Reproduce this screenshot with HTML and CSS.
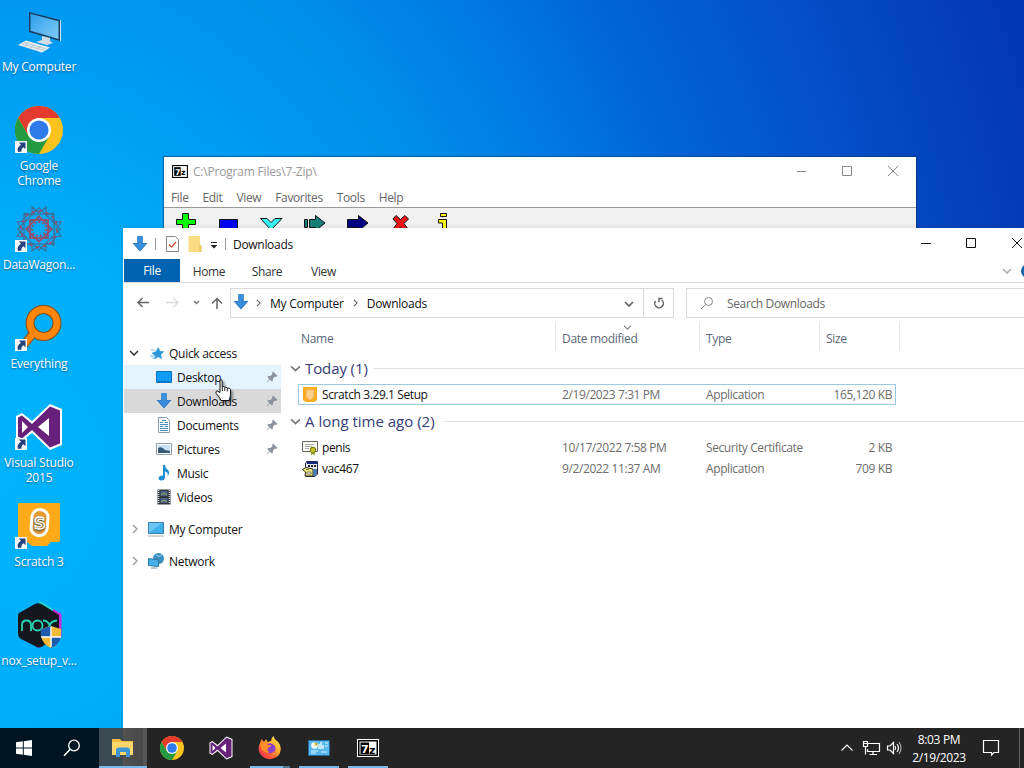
FILE: index.html
```html
<!DOCTYPE html>
<html lang="en">
<head>
    <meta charset="UTF-8">
    <meta name="viewport" content="width=device-width, initial-scale=1.0">
    <title>Downloads</title>
    <link rel="stylesheet" href="styles.css">
</head>
<body>
    <!-- icons that are used more than once -->
    <svg class="sprite" width="0" height="0">
        <symbol id="chrome" viewBox="0 0 48 48">
            <circle cx="24" cy="24" r="24" fill="#fcc31e"/>
            <path d="M3.2 12A24 24 0 0 1 44.8 12H24L13.6 30Z" fill="#e33b2e"/>
            <path d="M3.2 12A24 24 0 0 0 24 48L34.4 30L24 34L13.6 30Z" fill="#249a41"/>
            <circle cx="24" cy="24" r="12" fill="#fff"/>
            <circle cx="24" cy="24" r="9.6" fill="#2f7bea"/>
        </symbol>
        <symbol id="vs" viewBox="0 0 48 48">
            <path d="M35 1L47 6V42L35 47L17 30L7 38L1 35V13L7 10L17 18Z" fill="#fff"/>
            <path d="M35 3.500L45 7.500V40.500L35 44.500L17 27L7 35.500L3 33.500V14.500L7 12.500L17 21Z" fill="#68217a"/>
            <path d="M34 15V33L23 24ZM7 18V30L13 24Z" fill="#fff"/>
        </symbol>
        <symbol id="down" viewBox="0 0 16 16">
            <path d="M5.500 0H10.500V7H15.500L8 15.500L.5 7H5.500Z" fill="#3a8fdc"/>
            <path d="M5.500 .5V7.500H1.500L8 14.800L14.500 7.500H10.500V.5" fill="none" stroke="#2c74b8" stroke-width=".7"/>
        </symbol>
        <symbol id="pin" viewBox="0 0 12 12">
            <path d="M7 .5L11.500 5L10.200 5.800L8.800 5.700L7 7.500L6.800 9.800L5.900 10.500L3.800 8.400L.8 11.500L.4 11.200L3.400 8L1.400 6L2.200 5.100L4.500 5L6.300 3.200L6.200 1.700Z" fill="#8b9299"/>
        </symbol>
        <symbol id="shortcut" viewBox="0 0 12 12">
            <path d="M0 0H12V12H0Z" fill="#f4f7fa"/>
            <path d="M3.800 1.500H10.500V8.200L8.500 6.200Q6 7.500 6.500 10.500L3.200 11Q1 7 6 3.700Z" fill="#24437c"/>
        </symbol>
        <symbol id="chev-down" viewBox="0 0 10 6">
            <path d="M1 1L5 5L9 1" fill="none" stroke="currentColor" stroke-width="1.500"/>
        </symbol>
        <symbol id="chev-right" viewBox="0 0 6 10">
            <path d="M1 1L5 5L1 9" fill="none" stroke="currentColor" stroke-width="1.300"/>
        </symbol>
    </svg>

    <div class="desktop">
        <div class="shortcuts">
            <div class="shortcut">
                <svg class="big" viewBox="0 0 48 48">
                    <defs>
                        <linearGradient id="screen" x1="0" y1="0" x2="1" y2="1">
                            <stop offset="0" stop-color="#2c9fea"/>
                            <stop offset="1" stop-color="#83cbf8"/>
                        </linearGradient>
                    </defs>
                    <path d="M14 5L45 13V34L14 25Z" fill="#163e60"/>
                    <path d="M15.500 6.800L43.500 14.200V32L15.500 23.800Z" fill="url(#screen)"/>
                    <path d="M45 13L46 13.500V34.500L45 34Z" fill="#cde1ee"/>
                    <path d="M27 29L35 31V34L38 36L32 38L21 35L27 33Z" fill="#d3dce2"/>
                    <path d="M11 33.500L35 40.500L27 45.500L3 38Z" fill="#e9eef0"/>
                    <path d="M7 37L29 43.500M9 35.500L31 42M13 35L10 40M19 37L15 42M25 38.500L21 44" stroke="#a6b6c1" stroke-width=".7"/>
                </svg>
                <span>My Computer</span>
            </div>
            <div class="shortcut">
                <svg class="big"><use href="#chrome"/></svg>
                <svg class="arrow"><use href="#shortcut"/></svg>
                <span>Google<br>Chrome</span>
            </div>
            <div class="shortcut">
                <svg class="big" viewBox="0 0 48 48">
                    <g fill="none" stroke="#46698f" stroke-width="1.100">
                        <rect x="9" y="9" width="30" height="30"/>
                        <rect x="9" y="9" width="30" height="30" transform="rotate(45 24 24)"/>
                        <path d="M17 2L24 8L31 2V10L38 8L38 16L46 17L41 24L46 31L38 32V40L31 38V46L24 41L17 46V38L10 40V32L2 31L8 24L2 17L10 16V8L17 10Z"/>
                        <circle cx="24" cy="24" r="10"/>
                    </g>
                    <g fill="none" stroke="#92526e" stroke-width="1.800">
                        <rect x="15" y="15" width="18" height="18"/>
                        <rect x="15" y="15" width="18" height="18" transform="rotate(45 24 24)"/>
                        <circle cx="24" cy="24" r="18" stroke-dasharray="3 4"/>
                        <circle cx="24" cy="24" r="7" stroke-dasharray="2 2"/>
                    </g>
                </svg>
                <svg class="arrow"><use href="#shortcut"/></svg>
                <span>DataWagon...</span>
            </div>
            <div class="shortcut">
                <svg class="big" viewBox="0 0 48 48">
                    <path d="M20 27L8 42" stroke="#81501d" stroke-width="8.500"/>
                    <circle cx="28.500" cy="19" r="13.500" fill="none" stroke="#81501d" stroke-width="9"/>
                    <circle cx="28.500" cy="19" r="13.500" fill="none" stroke="#ff850b" stroke-width="6.800"/>
                    <path d="M21 26L8.500 41.500" stroke="#ff850b" stroke-width="6.500"/>
                </svg>
                <svg class="arrow"><use href="#shortcut"/></svg>
                <span>Everything</span>
            </div>
            <div class="shortcut">
                <svg class="big"><use href="#vs"/></svg>
                <svg class="arrow"><use href="#shortcut"/></svg>
                <span>Visual Studio<br>2015</span>
            </div>
            <div class="shortcut">
                <svg class="big" viewBox="0 0 48 48">
                    <path d="M4 1H44Q45 1 45 2V38Q45 40 43 40H36L32 44H17L12 40H5Q3 40 3 38V2Q3 1 4 1Z" fill="#ffab19"/>
                    <rect x="16.500" y="7.500" width="16" height="26" rx="7.500" transform="rotate(5 24 21)" fill="#e49b34" stroke="#fff" stroke-width="3"/>
                    <text x="19" y="27" class="scratch-s">S</text>
                </svg>
                <svg class="arrow"><use href="#shortcut"/></svg>
                <span>Scratch 3</span>
            </div>
            <div class="shortcut">
                <svg class="big" viewBox="0 0 48 48">
                    <path d="M24 0L45 12L24 24Z" fill="#22d7ca"/>
                    <path d="M38 8L46.500 13V36L36 42ZM3.500 32L24 47.500V40Z" fill="#c628da"/>
                    <path d="M4 12L20 3Q24 1 28 4L44 14V35L28 45Q24 48 20 45L6 38Q3 36 3 32V15Q3 13 4 12Z" fill="#14171e"/>
                    <path d="M7 30V24Q7 19.500 11.500 19.500Q16 19.500 16 24V30M28 19.500Q32 19.500 34 23Q37 29 43 29.500M28 29.500Q32 29.500 34 25Q36 20 42 19.500" fill="none" stroke="#29d4b3" stroke-width="1.800"/>
                    <circle cx="22.500" cy="24.500" r="5" fill="none" stroke="#29d4b3" stroke-width="1.800"/>
                    <path d="M36 25L46 28Q47 43 36 47Q25 43 26 28Z" fill="#f8b936"/>
                    <path d="M36 25V36H26Q25.500 33 26 28ZM36 36H46Q44 44 36 47Z" fill="#1e5bad"/>
                    <path d="M36 26V46M26 36H46" stroke="#fff" stroke-width="1.500"/>
                </svg>
                <span>nox_setup_v...</span>
            </div>
        </div>

        <!-- 7-Zip window, behind the explorer -->
        <div class="window zip">
            <div class="zip-title">
                <svg class="zip-logo" viewBox="0 0 22 18">
                    <path d="M0 0H22V18H0Z" fill="#000"/>
                    <path d="M1.500 1.500H20.500V16.500H1.500Z" fill="#fff"/>
                    <path d="M3 3H12V15H3Z" fill="#000"/>
                    <text x="4" y="13.500" class="seven">7</text>
                    <text x="12.500" y="14" class="zed">z</text>
                </svg>
                <span>C:\Program Files\7-Zip\</span>
                <svg class="controls" viewBox="0 0 138 30">
                    <path d="M19 14.500H28M64.500 9.500H73.500V18.500H64.500ZM110 9L120 19M120 9L110 19" fill="none" stroke="#888"/>
                </svg>
            </div>
            <div class="zip-menu">
                <span>File</span><span>Edit</span><span>View</span><span>Favorites</span><span>Tools</span><span>Help</span>
            </div>
            <svg class="zip-tools" viewBox="0 0 300 24">
                <g stroke="#111" stroke-width="1">
                    <path d="M18.500 6.500H24.500V12.500H31.500V17.500H24.500V24H18.500V17.500H12.500V12.500H18.500Z" fill="#0f0"/>
                    <path d="M55.500 12.500H73.500V24H55.500Z" fill="#0000f0"/>
                    <path d="M96.500 11.500H103L107 15.500L111 11.500H118L107 23Z" fill="#38f7f7"/>
                    <path d="M140.500 12.500H143.500V20.500H140.500ZM145.500 12.500H151.500V8.500L161 16L151.500 24V20.500H145.500Z" fill="#138078"/>
                    <path d="M183.500 12.500H194.500V8.500L204 16L194.500 24V20.500H183.500Z" fill="#000080"/>
                    <path d="M229 12L232 8.500L236.500 12.500L241 8.500L244.500 12L240 16.500L244 22L241 25L236.500 20L232 25L229 22L233 16.500Z" fill="#f01414"/>
                    <path d="M276.500 6.500H282.500V9.500H276.500ZM274.500 12.500H282.500V25H278.500V16H274.500Z" fill="#ff0"/>
                </g>
            </svg>
        </div>

        <div class="window explorer">
            <div class="titlebar">
                <svg class="ic16"><use href="#down"/></svg>
                <i class="sep"></i>
                <svg class="check" viewBox="0 0 13 16">
                    <path d="M.5 .5H9.500L12.500 3.500V15.500H.5Z" fill="#fafafa" stroke="#8b8787"/>
                    <path d="M3 8.500L5.500 11L10 6" fill="none" stroke="#d94f37" stroke-width="1.300"/>
                </svg>
                <svg class="folder" viewBox="0 0 14 16">
                    <path d="M.5 0H12V9L13.500 10V16H.5Z" fill="#fbdc84"/>
                    <path d="M11 9H13.500V16H11Z" fill="#f0ca65"/>
                </svg>
                <svg class="more" viewBox="0 0 8 8"><path d="M1 1.500H7" stroke="#222"/><path d="M.5 4H7.500L4 7.500Z" fill="#222"/></svg>
                <i class="sep"></i>
                <span class="title">Downloads</span>
                <svg class="controls" viewBox="0 0 138 30">
                    <path d="M19 14.500H29M64.500 9.500H73.500V18.500H64.500ZM110 9L120 19M120 9L110 19" fill="none" stroke="#111"/>
                </svg>
            </div>
            <div class="tabs">
                <span class="file-tab">File</span>
                <span class="tab">Home</span>
                <span class="tab">Share</span>
                <span class="tab">View</span>
                <svg class="ribbon-chev"><use href="#chev-down"/></svg>
                <i class="help"></i>
            </div>
            <div class="address-row">
                <svg class="nav" viewBox="0 0 96 16">
                    <g fill="none" stroke-width="1.500">
                        <path d="M17 7.500H6M10.500 3L6 7.500L10.500 12" stroke="#666"/>
                        <path d="M34 7.500H46M41.500 3L46 7.500L41.500 12" stroke="#ddd"/>
                        <path d="M62 6L64.500 8.500L67 6" stroke="#777"/>
                        <path d="M85 14V3.500M80 8.500L85 3.500L90 8.500" stroke="#666"/>
                    </g>
                </svg>
                <div class="address">
                    <svg class="ic16"><use href="#down"/></svg>
                    <svg class="crumb"><use href="#chev-right"/></svg>
                    <span>My Computer</span>
                    <svg class="crumb"><use href="#chev-right"/></svg>
                    <span>Downloads</span>
                    <svg class="drop"><use href="#chev-down"/></svg>
                    <div class="refresh">
                        <svg viewBox="0 0 12 12"><path d="M8.500 2.500A4.300 4.300 0 1 1 3.500 2.500M6.500 5.500H10.500M5.500 1V4.500H9" fill="none" stroke="none"/><path d="M3.300 3A4.300 4.300 0 1 0 9.500 4M2.500 1.500H6V5" fill="none" stroke="#666" stroke-width="1.500"/></svg>
                    </div>
                </div>
                <div class="search">
                    <svg viewBox="0 0 14 14"><path d="M5.500 8.500L1 13" stroke="#888"/><circle cx="8.500" cy="5.500" r="4" fill="none" stroke="#888"/></svg>
                    <span>Search Downloads</span>
                </div>
            </div>
            <div class="content">
                <div class="sidebar">
                    <div class="side root open">
                        <svg class="toggle-open"><use href="#chev-down"/></svg>
                        <svg class="ic16 star" viewBox="0 0 16 16">
                            <path d="M9.500 2L11 6L15.500 6.500L12 9.500L13 14L9 12L5.500 14.500L5.700 10.500L2.500 8L6.500 6.500Z" fill="#2c98dc"/>
                            <path d="M2 5H6M1 11H5M3 13H5" stroke="#75bdea"/>
                        </svg>
                        <span>Quick access</span>
                    </div>
                    <div class="side hover">
                        <svg class="ic16" viewBox="0 0 16 16"><path d="M.5 2.500H15.500V13.500H.5Z" fill="#109bf4" stroke="#0874c4"/><path d="M2 12.500H14" stroke="#0b5f9e" stroke-dasharray="2 1"/></svg>
                        <span>Desktop</span>
                        <svg class="pin"><use href="#pin"/></svg>
                    </div>
                    <div class="side selected">
                        <svg class="ic16"><use href="#down"/></svg>
                        <span>Downloads</span>
                        <svg class="pin"><use href="#pin"/></svg>
                    </div>
                    <div class="side">
                        <svg class="ic16" viewBox="0 0 16 16">
                            <path d="M2.500 .5H10.500L13.500 3.500V15.500H2.500Z" fill="#f6fafc" stroke="#8b9caa"/>
                            <path d="M4 5.500H7M8.500 5.500H12M4 7.500H12M4 9.500H7M8.500 9.500H12M4 11.500H12M4 13.500H12M6 3.500H10" stroke="#4b8dba"/>
                        </svg>
                        <span>Documents</span>
                        <svg class="pin"><use href="#pin"/></svg>
                    </div>
                    <div class="side">
                        <svg class="ic16" viewBox="0 0 16 16">
                            <path d="M.5 2.500H15.500V13.500H.5Z" fill="#fff" stroke="#8e9daa"/>
                            <path d="M2 4H14V12H2Z" fill="#c5e1f3"/>
                            <path d="M2 7Q6 5 9 9L14 10V12H2Z" fill="#335b78"/>
                        </svg>
                        <span>Pictures</span>
                        <svg class="pin"><use href="#pin"/></svg>
                    </div>
                    <div class="side">
                        <svg class="ic16" viewBox="0 0 16 16">
                            <path d="M7 0H9Q9 3 12 5Q14.500 8 11.500 11Q12.500 7 9 6.500V12Q9 15.500 5.500 15.500Q2.500 15.500 2.500 13Q3 10.500 7 10.500Z" fill="#1d8fd3"/>
                        </svg>
                        <span>Music</span>
                    </div>
                    <div class="side">
                        <svg class="ic16" viewBox="0 0 16 16">
                            <path d="M1.500 .5H14.500V15.500H1.500Z" fill="#33383f"/>
                            <path d="M2.700 1V15M13.300 1V15" stroke="#eee" stroke-width="1.200" stroke-dasharray="1 1"/>
                            <path d="M4.500 2H11.500V7H4.500ZM4.500 9H11.500V14H4.500Z" fill="#486488"/>
                            <path d="M5 6L8 4L11 6M5 13L8 11L11 13" stroke="#a4a455" fill="none"/>
                        </svg>
                        <span>Videos</span>
                    </div>
                    <div class="side root">
                        <svg class="toggle"><use href="#chev-right"/></svg>
                        <svg class="ic16" viewBox="0 0 16 16"><path d="M.5 1.500H15.500V12.500H.5Z" fill="#3fafe9" stroke="#3480b2"/><path d="M1 12V2H14Z" fill="#6cc6f4"/><path d="M0 15H16" stroke="#9aa9b4"/></svg>
                        <span>My Computer</span>
                    </div>
                    <div class="side root">
                        <svg class="toggle"><use href="#chev-right"/></svg>
                        <svg class="ic16" viewBox="0 0 16 16"><circle cx="10.500" cy="5.500" r="5.500" fill="#3a8ec0"/><path d="M8 2Q11 5 14 2" stroke="#9ed4e8" fill="none"/><path d="M.5 5.500L10.500 7V13.500L.5 12.500Z" fill="#45b1e9" stroke="#2d79a8"/><path d="M3 15H9" stroke="#7893a5"/></svg>
                        <span>Network</span>
                    </div>
                </div>
                <div class="files">
                    <div class="row head">
                        <span>Name</span>
                        <span>Date modified<svg class="sort"><use href="#chev-down"/></svg></span>
                        <span>Type</span>
                        <span>Size</span>
                    </div>
                    <div class="group">
                        <svg><use href="#chev-down"/></svg>
                        <span>Today (1)</span>
                    </div>
                    <div class="row focused">
                        <span class="name">
                            <svg class="ic16" viewBox="0 0 16 16"><path d="M1 0H15V13L12 15H4L1 13Z" fill="#f9ab24"/><path d="M4.500 3H11.500V10L9 12.500H7L4.500 10Z" fill="#ffd08c" stroke="#f6be73"/></svg>
                            Scratch 3.29.1 Setup
                        </span>
                        <span>2/19/2023 7:31 PM</span>
                        <span>Application</span>
                        <span class="size">165,120 KB</span>
                    </div>
                    <div class="group second">
                        <svg><use href="#chev-down"/></svg>
                        <span>A long time ago (2)</span>
                    </div>
                    <div class="row">
                        <span class="name">
                            <svg class="ic16" viewBox="0 0 16 16"><path d="M.5 1.500H15.500V11.500H.5Z" fill="#faf9f5" stroke="#65645e"/><path d="M3 4.500H12M3 6.500H10M3 8.500H7" stroke="#aaa"/><circle cx="11" cy="10" r="2.800" fill="#c9c421" stroke="#717015"/><path d="M9.500 12.500L9 15.500L11 14L13 15.500L12.500 12.500Z" fill="#8d9420"/></svg>
                            penis
                        </span>
                        <span>10/17/2022 7:58 PM</span>
                        <span>Security Certificate</span>
                        <span class="size">2 KB</span>
                    </div>
                    <div class="row">
                        <span class="name">
                            <svg class="ic16" viewBox="0 0 16 16"><path d="M4.500 .5H15.500V13L13 15.500H3.500V3Z" fill="#e9e9ed" stroke="#222957"/><path d="M5 2H15" stroke="#172a83" stroke-width="2"/><path d="M6 5H8M9 5H11M12 5H14" stroke="#222" stroke-width="2"/><path d="M.5 8.500L4 6.500L11 8V15H3L3.500 11Z" fill="#f1e678" stroke="#333527"/><path d="M11 8H15V13L13 15H11Z" fill="#4a77ac"/><path d="M4 8.500H7M5 11H9V13H5Z" fill="#fff" stroke="#333527" stroke-width=".6"/></svg>
                            vac467
                        </span>
                        <span>9/2/2022 11:37 AM</span>
                        <span>Application</span>
                        <span class="size">709 KB</span>
                    </div>
                </div>
            </div>
        </div>

        <svg class="cursor" viewBox="0 0 17 23">
            <path d="M5 1.800Q5 .7 6 .7Q7.200 .7 7.200 1.800V8Q8 6.800 9.700 8.200Q11 7.500 12.200 9.200Q14.500 8.500 15.500 10.500V15Q15.500 18 14 21.500H6Q5 18.500 1.200 14.500Q.2 12.500 2 11.800L5 13.500Z" fill="#fff" stroke="#111"/>
            <path d="M7.300 8V12M9.800 8.500V12M12.300 9.500V12.500" stroke="#222"/>
        </svg>
    </div>

    <div class="taskbar">
        <div class="start">
            <svg viewBox="0 0 16 16"><path d="M0 2.300L6.800 1.300V7.500H0ZM7.800 1.200L16 0V7.500H7.800ZM0 8.500H6.800V14.700L0 13.700ZM7.800 8.500H16V16L7.800 14.800Z" fill="#fff"/></svg>
        </div>
        <div class="find">
            <svg viewBox="0 0 18 18"><circle cx="11" cy="6.500" r="5.300" fill="none" stroke="#fff" stroke-width="1.300"/><path d="M7.200 10.300L1 16.800" stroke="#fff" stroke-width="1.500"/></svg>
        </div>
        <div class="app active">
            <svg class="app-icon" viewBox="0 0 24 24">
                <path d="M1 4H9L11 6H22V20H1Z" fill="#f0b93e"/>
                <path d="M1 7H22V20H1Z" fill="#ffd66b"/>
                <path d="M5 14L7 12.500H17L19 14V22H15V17H9V22H5Z" fill="#3d95d6"/>
            </svg>
        </div>
        <div class="app"><svg class="app-icon"><use href="#chrome"/></svg></div>
        <div class="app"><svg class="app-icon"><use href="#vs"/></svg></div>
        <div class="app running grouped">
            <svg class="app-icon" viewBox="0 0 24 24">
                <defs>
                    <linearGradient id="fox" x1="1" y1="0" x2="0" y2="1">
                        <stop offset="0" stop-color="#fff04a"/>
                        <stop offset=".35" stop-color="#ffb331"/>
                        <stop offset=".65" stop-color="#ff5b36"/>
                        <stop offset="1" stop-color="#eb2460"/>
                    </linearGradient>
                </defs>
                <path d="M2 7L3.500 3L6 6L8 3L9.500 6L13 5Q13 2 15.500 0Q16 3 19 5L21 7Q25 14 20 20Q13 26 5 21Q-2 15 2 7Z" fill="url(#fox)"/>
                <path d="M8 9Q13 5 17 10Q19 16 13 17Q8 18 6 13L10 12Z" fill="#8d41cb"/>
                <path d="M2 7Q7 5 10 9L13 9Q13 11 10 12Q8 15 12 16Q8 18 5 15Q2 12 2 7Z" fill="#ff8e26"/>
            </svg>
        </div>
        <div class="app running">
            <svg class="app-icon" viewBox="0 0 24 24">
                <path d="M1.500 4.500H22.500V19.500H1.500Z" fill="#55b8ef" stroke="#286c9d"/>
                <circle cx="7.500" cy="9.500" r="3.300" fill="#f7faf6"/><path d="M7.500 9.500V6.200A3.300 3.300 0 0 1 10.800 9.500Z" fill="#c5bd41"/>
                <path d="M12 8V13M14 6V13M16 9V13" stroke="#e7f8ff" stroke-width="1.500"/>
                <path d="M18 7H21M18 10H21M4 15H11M4 17H9M14 16H20" stroke="#d9f4ff"/>
            </svg>
        </div>
        <div class="app running">
            <svg class="zip-icon" viewBox="0 0 22 18">
                <path d="M0 0H22V18H0Z" fill="#fff"/>
                <path d="M1 1H21V17H1Z" fill="#000"/>
                <path d="M2.500 2.500H19.500V15.500H2.500Z" fill="#fff"/>
                <path d="M3.500 3.500H12V15H3.500Z" fill="#000"/>
                <text x="4" y="13.500" class="seven">7</text>
                <text x="12" y="14.500" class="zed">z</text>
            </svg>
        </div>
        <div class="tray">
            <svg class="tray-icons" viewBox="0 0 64 18">
                <g fill="none" stroke="#fff" stroke-width="1.200">
                    <path d="M1.500 11.500L7 6L12.500 11.500"/>
                    <path d="M28 4.500H39.500V12.500H27.500V10M33 12.500V15.500M29.500 15.500H37M23.500 2.500H27.500V7.500H23.500ZM25.500 7.500V15.500M23.500 4.500H27"/>
                    <path d="M47.500 7H50L53.500 3.500V14.500L50 11H47.500ZM55 7Q56.500 9 55 11M57 5Q60 9 57 13"/>
                    <path d="M59 3Q63 9 59 15" stroke="#aaa"/>
                </g>
            </svg>
            <div class="clock">8:03 PM<br>2/19/2023</div>
            <svg class="notice" viewBox="0 0 18 18"><path d="M1.500 1.500H16.500V13.500H12L9.500 16L9.500 13.500H1.500Z" fill="none" stroke="#fff" stroke-width="1.200"/></svg>
        </div>
    </div>
</body>
</html>
```
FILE: styles.css
```css
* {
    box-sizing: border-box;
}
body {
    margin: 0;
    width: 1024px;
    height: 768px;
    overflow: hidden;
    display: flex;
    flex-direction: column;
    font-family: "Open Sans", "Noto Sans", sans-serif;
    font-size: 12px;
    letter-spacing: -0.36px;
    line-height: 15px;
    color: #111;
}
svg {
    display: block;
    flex: none;
}
.sprite {
    position: absolute;
}
.seven {
    font: bold 11px "DejaVu Sans", sans-serif;
    fill: #fff;
    letter-spacing: 0;
}
.zed {
    font: bold 11px "DejaVu Sans", sans-serif;
    fill: #000;
    letter-spacing: 0;
}
.scratch-s {
    font: bold 16px "DejaVu Sans", sans-serif;
    fill: #e49b34;
    stroke: #fff;
    stroke-width: 1.3px;
}
.desktop {
    position: relative;
    height: 728px;
    overflow: hidden;
    background: radial-gradient(ellipse 1080px 1300px at 0 480px, #00b3fc 0%, #00aefb 18%, #009cf3 33%, #008fea 45%, #007be3 56%, #0064d6 67%, #0450c8 81%, #0440ba 93%, #0338b4 100%);
}
.shortcuts {
    width: 78px;
    padding-top: 7px;
}
.shortcut {
    position: relative;
    height: 99px;
    display: flex;
    flex-direction: column;
    align-items: center;
    gap: 4px;
    color: #fff;
    letter-spacing: -0.2px;
    text-align: center;
    white-space: nowrap;
    text-shadow: 0 1px 2px rgba(0, 40, 80, 0.6);
}
.big {
    width: 48px;
    height: 48px;
}
.arrow {
    position: absolute;
    left: 15px;
    top: 35px;
    width: 12px;
    height: 12px;
}

/* windows */
.window {
    position: absolute;
    background: #fff;
}
.zip {
    left: 164px;
    top: 157px;
    width: 752px;
    height: 200px;
    color: #666;
    background: linear-gradient(#fff 51px, #f0f0f0 51px);
    box-shadow: 0 0 1px 1px rgba(0, 50, 90, 0.5);
}
.zip-title {
    display: flex;
    align-items: center;
    height: 29px;
    padding-left: 8px;
    gap: 5px;
    color: #999;
    letter-spacing: -0.2px;
}
.zip-logo {
    width: 16px;
    height: 13px;
}
.controls {
    width: 138px;
    height: 30px;
    margin-left: auto;
}
.zip-menu {
    display: flex;
    align-items: center;
    gap: 14px;
    height: 22px;
    padding: 1px 0 0 7px;
    border-bottom: 1px solid #999;
}
.zip-tools {
    width: 300px;
    height: 24px;
    margin-top: -1px;
}
.explorer {
    left: 123px;
    top: 228px;
    width: 917px;
    height: 500px;
    padding-left: 1px;
    box-shadow: 0 0 4px rgba(0, 0, 0, 0.12);
}
.titlebar {
    display: flex;
    align-items: center;
    height: 31px;
    padding-left: 8px;
}
.ic16 {
    width: 16px;
    height: 16px;
}
.sep {
    width: 1px;
    height: 12px;
    margin-left: 7px;
    background: #999;
}
.check {
    width: 13px;
    height: 16px;
    margin-left: 10px;
}
.folder {
    width: 14px;
    height: 16px;
    margin-left: 9px;
}
.more {
    width: 8px;
    height: 8px;
    margin: 2px 0 0 8px;
}
.title {
    margin: 1px 0 0 7px;
    letter-spacing: -0.3px;
}
.tabs {
    display: flex;
    align-items: center;
    height: 24px;
    border-bottom: 1px solid #dadbdc;
}
.file-tab {
    width: 56px;
    height: 23px;
    line-height: 24px;
    background: #0063b1;
    color: #fff;
    text-align: center;
}
.tab {
    width: 58px;
    padding-top: 1px;
    text-align: center;
    color: #333;
}
.tab:nth-child(4) {
    width: 55px;
}
.ribbon-chev {
    width: 10px;
    height: 6px;
    margin-left: auto;
    color: #aaa;
}
.help {
    width: 14px;
    height: 14px;
    margin: 0 5px 0 9px;
    border-radius: 50%;
    background: #1667a8;
}
.address-row {
    display: flex;
    align-items: center;
    height: 40px;
    padding-left: 8px;
}
.nav {
    width: 96px;
    height: 16px;
}
.address {
    display: flex;
    align-items: center;
    width: 444px;
    height: 30px;
    padding-left: 2px;
    margin-left: 2px;
    border: 1px solid #d9d9d9;
}
.address > .ic16 {
    margin-bottom: 2px;
}
.address span {
    letter-spacing: -0.25px;
}
.crumb {
    width: 5px;
    height: 8px;
    margin: 0 9px 1px 7px;
    color: #555;
}
.address span + .crumb {
    margin-left: 9px;
}
.drop {
    width: 10px;
    height: 6px;
    margin: 1px 9px 0 auto;
    color: #555;
}
.refresh {
    display: flex;
    align-items: center;
    justify-content: center;
    width: 30px;
    height: 28px;
    border-left: 1px solid #d9d9d9;
}
.refresh svg {
    width: 12px;
    height: 12px;
    transform: scaleX(-1);
}
.search {
    display: flex;
    align-items: center;
    gap: 13px;
    flex: 1;
    height: 30px;
    margin-left: 12px;
    padding-left: 13px;
    border: 1px solid #d9d9d9;
    color: #666;
}
.search svg {
    width: 14px;
    height: 14px;
}
.content {
    display: flex;
}
.sidebar {
    width: 157px;
    padding-top: 18px;
}
.side {
    display: flex;
    align-items: center;
    gap: 5px;
    height: 24px;
    padding-left: 32px;
    letter-spacing: -0.28px;
}
.side.root {
    margin-top: 8px;
    padding-left: 8px;
}
.side.root .ic16 {
    margin-left: -1px;
}
.side.root.open {
    margin-top: 0;
    padding-left: 5px;
}
.hover {
    background: #e5f3ff;
}
.selected {
    background: #d9d9d9;
}
.toggle {
    width: 6px;
    height: 10px;
    margin-right: 6px;
    color: #999;
}
.toggle-open {
    width: 10px;
    height: 6px;
    margin-right: 5px;
    color: #333;
}
.side.root.open .star {
    margin: 0;
}
.side.root.open span {
    margin-left: -1px;
}
.pin {
    width: 12px;
    height: 12px;
    margin: 0 3px 0 auto;
}
.files {
    flex: 1;
    padding-left: 9px;
}
.row {
    display: grid;
    grid-template-columns: 264px 144px 119px 71px;
    width: 598px;
    height: 21px;
    margin-left: 8px;
    align-items: center;
    color: #6d6d6d;
    letter-spacing: -0.4px;
    white-space: nowrap;
}
.row.head {
    grid-template-columns: 255px 144px 120px 80px;
    width: 610px;
    height: 28px;
    margin-left: 11px;
    color: #5b6678;
    letter-spacing: -0.3px;
}
.head span {
    position: relative;
    height: 28px;
    line-height: 31px;
    padding-left: 6px;
    border-right: 1px solid #e5e5e5;
}
.head span:first-child {
    padding-left: 0;
}
.sort {
    position: absolute;
    left: 67px;
    top: 2px;
    width: 9px;
    height: 5px;
    color: #888;
}
.name {
    display: flex;
    align-items: center;
    gap: 4px;
    padding-left: 4px;
    color: #111;
}
.size {
    text-align: right;
    padding-right: 4px;
}
.row.focused {
    outline: 1px solid #99cbe0;
    outline-offset: -1px;
}
.group {
    display: flex;
    align-items: center;
    height: 33px;
    padding-top: 1px;
    gap: 4px;
    color: #353c78;
    font-size: 15px;
    letter-spacing: -0.1px;
}
.group.second {
    height: 32px;
    padding-top: 0;
    letter-spacing: 0;
}
.group svg {
    width: 11px;
    height: 7px;
    color: #777;
}
.group::after {
    content: "";
    flex: 1;
    height: 1px;
    margin-left: 2px;
    background: #e1e1e1;
}
.group.second::after {
    margin-left: 5px;
}
.cursor {
    position: absolute;
    left: 215px;
    top: 379px;
    width: 17px;
    height: 23px;
    filter: drop-shadow(2px 2px 1px rgba(0, 0, 0, 0.4));
}

/* taskbar */
.taskbar {
    display: flex;
    height: 40px;
    background: linear-gradient(90deg, #001522 123px, #242424 123px);
    color: #fff;
}
.start, .find, .app {
    display: flex;
    align-items: center;
    justify-content: center;
}
.start {
    width: 48px;
}
.start svg {
    width: 16px;
    height: 16px;
}
.find {
    width: 51px;
    padding-right: 3px;
}
.find svg {
    width: 18px;
    height: 18px;
}
.app {
    width: 49px;
}
.app-icon {
    width: 24px;
    height: 24px;
}
.active {
    width: 48px;
    background: linear-gradient(90deg, #3b4a52 24px, #515151 24px, #484848 44px, #565656 44px);
    border-bottom: 2px solid #76b9ed;
}
.running {
    width: 40px;
    margin: 0 4px 0 5px;
    padding-top: 2px;
    border-bottom: 2px solid #76b9ed;
}
.grouped {
    background: linear-gradient(90deg, #76b9ed 33px, #51738c 33px) bottom / 100% 2px no-repeat border-box;
    border-bottom-color: transparent;
}
.zip-icon {
    width: 22px;
    height: 18px;
}
.tray {
    display: flex;
    align-items: center;
    margin-left: auto;
    padding-right: 4px;
}
.tray-icons {
    width: 64px;
    height: 18px;
}
.clock {
    width: 66px;
    margin: 1px 0 0 2px;
    line-height: 18px;
    text-align: center;
    letter-spacing: -0.35px;
}
.notice {
    width: 18px;
    height: 18px;
    margin-left: 10px;
}
.tray::after {
    content: "";
    width: 1px;
    height: 40px;
    margin-left: 19px;
    background: #666;
}
```
